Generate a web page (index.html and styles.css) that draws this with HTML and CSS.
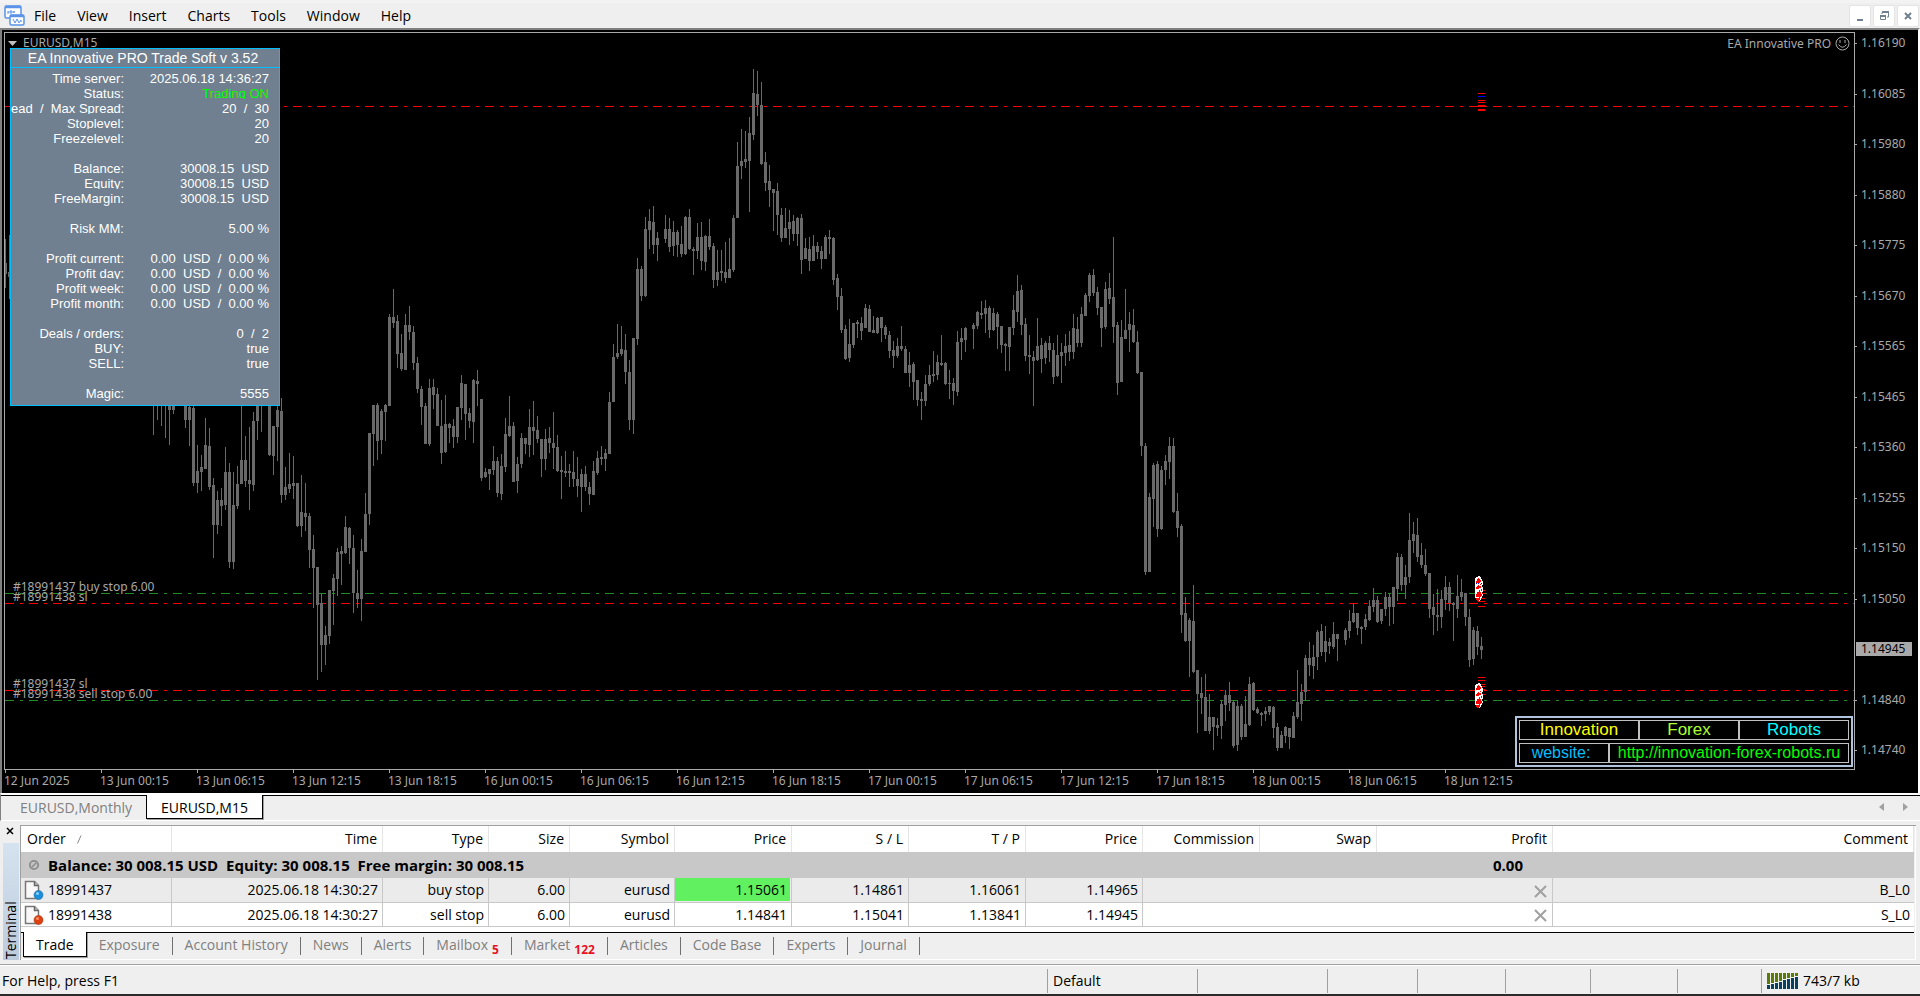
FILE: index.html
```html
<!DOCTYPE html>
<html lang="en">
<head>
<meta charset="utf-8">
<title>EURUSD,M15</title>
<link rel="stylesheet" href="styles.css">
</head>
<body>
<header class="menubar">
  <svg class="app-icon" width="22" height="22" viewBox="0 0 22 22" fill="none" stroke="#5a93e8" stroke-width="1.5">
    <rect x="1" y="1" width="16" height="12" rx="1.5" fill="#fff"/>
    <path d="M1 2h16" stroke-width="2.5"/>
    <path d="M4 9V6M7 9V5M10 8V6M4 7h7" stroke-width="1"/>
    <rect x="6" y="10" width="14" height="10" rx="1.5" fill="#fff"/>
    <path d="M6 11h14" stroke-width="2.5"/>
    <path d="M9 14l2 4 2-4 2 4 2-3v2" stroke-width="1"/>
  </svg>
  <nav class="menu" aria-label="Main menu">
    <button>File</button><button>View</button><button>Insert</button><button>Charts</button><button>Tools</button><button>Window</button><button>Help</button>
  </nav>
  <div class="window-buttons">
    <button aria-label="Minimize"><svg width="12" height="12" viewBox="0 0 12 12"><path d="M3 9h6v2H3z" fill="#708090"/></svg></button>
    <button aria-label="Restore"><svg width="12" height="12" viewBox="0 0 12 12" fill="none" stroke="#708090"><path d="M4 4V2.500h6.500V7H9"/><path d="M4 2h7" stroke-width="2"/><path d="M2.500 5.500h5v4h-5z"/><path d="M2 6h6" stroke-width="2"/></svg></button>
    <button aria-label="Close"><svg width="12" height="12" viewBox="0 0 12 12"><path d="M3 3l6 6M9 3l-6 6" stroke="#708090" stroke-width="2"/></svg></button>
  </div>
</header>

<main class="chart">
  <section class="plot">
    <svg class="canvas" id="canvas" preserveAspectRatio="none" aria-label="EURUSD M15 candlestick chart">
      <g class="levels">
        <path class="sell" d="M5 106.500H4000"/>
        <path class="buy" d="M5 593.500H4000"/>
        <path class="sell" d="M5 603.500H4000"/>
        <path class="sell" d="M5 690.500H4000"/>
        <path class="buy" d="M5 700.500H4000"/>
      </g>
      <path id="candles" class="candles"/>
      <g class="ticks">
        <path d="M1478 93.500h7M1478 100.500h7M1478 102.500h7M1478 105.500h7M1478 106.500h9M1478 109.500h7M1478 110.500h7"/>
        <path d="M1478 96.500h7" class="blue"/>
        <path d="M1478 590.500h7M1478 593.500h7M1478 598.500h7M1478 601.500h7M1478 606.500h7"/>
        <path d="M1478 677.500h7M1478 680.500h7M1478 684.500h7M1478 686.500h7M1478 689.500h7M1478 694.500h7"/>
      </g>
      <g id="arrows">
        <g id="stack">
          <path d="M1475 578h1v-1h2v-1h2v1h1v2h1v2h1v4h-1v2h1v5h-1v2h1v2h-1v2h-1v2h-1v1h-2v-1h-2v-2h-1z" fill="#fff"/>
          <path d="M1477 579h1v-1h1v1h1v1h1v2h-1v1h-4v-2h1zM1477 586h1v-1h1v1h2v2h-2v1h-3v-2h1zM1477 592h2v-1h1v1h1v2h1v2h-2v1h-4v-3h1zM1476 598h3v-1h1v3h-1v1h-2v-1h-1z" fill="#f00"/>
          <path d="M1480 584h1v1h-1zM1481 589h1v2h-1zM1479 590h1v1h-1zM1480 596h1v1h-1z" fill="#f00"/>
        </g>
        <use href="#stack" y="107"/>
        <path d="M1476 583h1v1h-1zM1481 583h1v1h-1zM1478 583h1v1h-1z" fill="#00f"/>
      </g>
      <g class="order-labels">
        <text x="13" y="591">#18991437 buy stop 6.00</text>
        <text x="13" y="601">#18991438 sl</text>
        <text x="13" y="688">#18991437 sl</text>
        <text x="13" y="698">#18991438 sell stop 6.00</text>
      </g>
    </svg>
    <div class="symbol"><svg width="10" height="5" viewBox="0 0 10 5"><path d="M0 0h9L4.500 5z" fill="#c0c0c0"/></svg><span>EURUSD,M15</span></div>
    <div class="expert"><span>EA Innovative PRO</span><svg width="15" height="15" viewBox="0 0 15 15" fill="none" stroke="#a9a9a9"><circle cx="7.500" cy="7.500" r="6.500"/><path d="M5 4v3M10 4v3M3.500 8.500q4 5.500 8 0"/></svg></div>

    <section class="ea-panel">
      <h1>EA Innovative PRO Trade Soft v 3.52</h1>
      <dl>
        <div><dt>Time server:</dt><dd>2025.06.18 14:36:27</dd></div>
        <div><dt>Status:</dt><dd class="on">Trading ON</dd></div>
        <div><dt>ead  /  Max Spread:</dt><dd>20  /  30</dd></div>
        <div><dt>Stoplevel:</dt><dd>20</dd></div>
        <div class="last"><dt>Freezelevel:</dt><dd>20</dd></div>
        <div><dt>Balance:</dt><dd>30008.15  USD</dd></div>
        <div><dt>Equity:</dt><dd>30008.15  USD</dd></div>
        <div class="last"><dt>FreeMargin:</dt><dd>30008.15  USD</dd></div>
        <div class="last"><dt>Risk MM:</dt><dd>5.00 %</dd></div>
        <div><dt>Profit current:</dt><dd>0.00  USD  /  0.00 %</dd></div>
        <div><dt>Profit day:</dt><dd>0.00  USD  /  0.00 %</dd></div>
        <div><dt>Profit week:</dt><dd>0.00  USD  /  0.00 %</dd></div>
        <div class="last"><dt>Profit month:</dt><dd>0.00  USD  /  0.00 %</dd></div>
        <div><dt>Deals / orders:</dt><dd>0  /  2</dd></div>
        <div><dt>BUY:</dt><dd>true</dd></div>
        <div class="last"><dt>SELL:</dt><dd>true</dd></div>
        <div class="last"><dt>Magic:</dt><dd>5555</dd></div>
      </dl>
    </section>

    <aside class="brand">
      <div class="brand-row names"><span class="yellow">Innovation</span><span class="lime">Forex</span><span class="aqua">Robots</span></div>
      <div class="brand-row site"><span class="sky">website:</span><a href="http://innovation-forex-robots.ru">http://innovation-forex-robots.ru</a></div>
    </aside>
  </section>

  <div class="prices">
    <span>1.16190</span><span>1.16085</span><span>1.15980</span><span>1.15880</span><span>1.15775</span><span>1.15670</span><span>1.15565</span><span>1.15465</span><span>1.15360</span><span>1.15255</span><span>1.15150</span><span>1.15050</span><span class="current">1.14945</span><span>1.14840</span><span>1.14740</span>
  </div>
  <div class="times">
    <span>12 Jun 2025</span><span>13 Jun 00:15</span><span>13 Jun 06:15</span><span>13 Jun 12:15</span><span>13 Jun 18:15</span><span>16 Jun 00:15</span><span>16 Jun 06:15</span><span>16 Jun 12:15</span><span>16 Jun 18:15</span><span>17 Jun 00:15</span><span>17 Jun 06:15</span><span>17 Jun 12:15</span><span>17 Jun 18:15</span><span>18 Jun 00:15</span><span>18 Jun 06:15</span><span>18 Jun 12:15</span>
  </div>
</main>

<nav class="chart-tabs" aria-label="Charts">
  <button>EURUSD,Monthly</button><button class="active">EURUSD,M15</button>
  <div class="scroller">
    <button aria-label="Scroll left"><svg width="5" height="8" viewBox="0 0 5 8"><path d="M5 0v8L0 4z" fill="#a0a0a0"/></svg></button>
    <button aria-label="Scroll right"><svg width="5" height="8" viewBox="0 0 5 8"><path d="M0 0v8l5-4z" fill="#a0a0a0"/></svg></button>
  </div>
</nav>

<section class="terminal">
  <div class="side">
    <button aria-label="Close terminal"><svg width="8" height="8" viewBox="0 0 8 8"><path d="M1 1l6 6M7 1L1 7" stroke="#000" stroke-width="1.500"/></svg></button>
    <div class="side-title">Terminal</div>
  </div>
  <div class="terminal-body">
    <table class="orders">
      <colgroup><col class="w-order"><col class="w-time"><col class="w-type"><col class="w-size"><col class="w-symbol"><col class="w-price"><col class="w-price"><col class="w-price"><col class="w-price"><col class="w-price"><col class="w-price"><col class="w-profit"><col></colgroup>
      <thead>
        <tr><th class="left">Order <svg class="sort" width="5" height="9" viewBox="0 0 5 9"><path d="M.5 8.500L4 .5" stroke="#888"/></svg></th><th>Time</th><th>Type</th><th>Size</th><th>Symbol</th><th>Price</th><th>S / L</th><th>T / P</th><th>Price</th><th>Commission</th><th>Swap</th><th>Profit</th><th>Comment</th></tr>
      </thead>
      <tbody>
        <tr class="summary"><td colspan="11" class="left"><span class="cell"><svg width="20" height="20" viewBox="0 0 20 20"><circle cx="10" cy="10" r="4.200" fill="#c4c4c4" stroke="#8c8c8c" stroke-width="1.800"/><path d="M7.500 12.500l5-5" stroke="#8c8c8c" stroke-width="1.500"/></svg><span class="pre">Balance: 30 008.15 USD  Equity: 30 008.15  Free margin: 30 008.15</span></span></td><td class="total">0.00</td><td></td></tr>
        <tr class="shade"><td class="left"><span class="cell"><svg width="20" height="20" viewBox="0 0 20 20"><path d="M1.500 1.500h9l4 4v13h-13z" fill="#f8f8f8" stroke="#777" stroke-width="1.500"/><path d="M10.500 1.500v4h4" fill="#ccc" stroke="#666" stroke-width="1.500"/><circle cx="14.500" cy="15" r="4.500" fill="#1a90dc" stroke="#2a6a9a" stroke-width=".6"/><circle cx="13.500" cy="13.500" r="1.500" fill="#8cd0fa"/></svg>18991437</span></td><td>2025.06.18 14:30:27</td><td>buy stop</td><td>6.00</td><td>eurusd</td><td class="hit"><span>1.15061</span></td><td>1.14861</td><td>1.16061</td><td>1.14965</td><td colspan="3"><button aria-label="Delete order 18991437"><svg width="13" height="13" viewBox="0 0 13 13"><path d="M1 1l11 11M12 1L1 12" stroke="#a0a0a0" stroke-width="2"/></svg></button></td><td>B_L0</td></tr>
        <tr><td class="left"><span class="cell"><svg width="20" height="20" viewBox="0 0 20 20"><path d="M1.500 1.500h9l4 4v13h-13z" fill="#f8f8f8" stroke="#777" stroke-width="1.500"/><path d="M10.500 1.500v4h4" fill="#ccc" stroke="#666" stroke-width="1.500"/><circle cx="14.500" cy="15" r="4.500" fill="#e04010" stroke="#a03818" stroke-width=".6"/><circle cx="13.500" cy="13.500" r="1.500" fill="#f89068"/></svg>18991438</span></td><td>2025.06.18 14:30:27</td><td>sell stop</td><td>6.00</td><td>eurusd</td><td>1.14841</td><td>1.15041</td><td>1.13841</td><td>1.14945</td><td colspan="3"><button aria-label="Delete order 18991438"><svg width="13" height="13" viewBox="0 0 13 13"><path d="M1 1l11 11M12 1L1 12" stroke="#a0a0a0" stroke-width="2"/></svg></button></td><td>S_L0</td></tr>
      </tbody>
    </table>
    <nav class="terminal-tabs" aria-label="Terminal">
      <button class="active">Trade</button><button>Exposure</button><button>Account History</button><button>News</button><button>Alerts</button><button>Mailbox<sub>5</sub></button><button>Market<sub>122</sub></button><button>Articles</button><button>Code Base</button><button>Experts</button><button>Journal</button>
    </nav>
  </div>
</section>

<footer class="status">
  <span>For Help, press F1</span><span>Default</span><span></span><span></span><span></span><span></span><span></span><span></span>
  <span class="traffic"><svg width="31" height="16" viewBox="0 0 31 16"><path d="M0 0h3v11H0zM4 0h3v10H4zM8 0h3v9H8zM12 0h3v8h-3zM16 0h3v6h-3zM20 0h3v5h-3zM24 0h3v4h-3zM28 0h3v3h-3z" fill="#5a7a0a"/><path d="M0 12h3v4H0zM4 11h3v5H4zM8 10h3v6H8zM12 9h3v7h-3zM16 7h3v9h-3zM20 6h3v10h-3zM24 5h3v11h-3zM28 4h3v12h-3z" fill="#0a4060"/></svg>743/7 kb</span>
</footer>
<script src="chart.js"></script>
</body>
</html>
```
FILE: chart.js
```js
// Candles are [high, bodyTop, bodyBottom, low]; 0 marks a missing bar.
// Each run is drawn from x in steps of 4px; y = top + value / scale.
const runs = [
  { x: 5, top: 0, scale: 3, bars: [[717,790,822,864],[705,815,830,896]] },
  { x: 153, top: 400, scale: 3, bars: [
    [0,0,0,104],[0,0,0,60],[0,0,0,78],[0,0,0,114],[0,0,30,134],[0,0,30,42],0,0,[0,0,59,84],[0,20,59,138],
    [15,23,249,258],[135,213,249,279],[165,201,216,273],[54,135,207,207],[84,138,261,270],[234,255,375,474],
    [273,300,375,402],[264,300,318,378],[141,216,315,330],[189,216,486,504],[216,315,486,507],[198,252,318,327],
    [15,180,252,252],[108,180,243,261],[81,240,252,330],[36,63,255,273],[0,0,63,120],[0,0,0,96],0,[0,0,165,168],
    [78,78,168,225],[15,30,81,183]] },
  { x: 281, top: 250, scale: 3, bars: [
    [444,483,735,759],[651,711,735,750],[609,702,717,729],[618,699,708,747],[699,699,828,831],[675,786,828,861],
    [699,789,801,843],[789,798,900,954],[855,897,954,1074],[951,951,1065,1290],[1032,1059,1185,1266],
    [1128,1155,1185,1245],[1020,1020,1158,1182],[972,984,1023,1125],[894,906,987,1038],[888,903,912,1005],
    [798,831,909,912],[831,834,894,942],[855,894,1029,1089],[960,1029,1047,1074],[867,903,1047,1113],
    [729,792,906,906],[549,549,792,825],[465,465,552,648],[459,465,573,630],[477,483,570,612],[462,465,486,573],
    [192,201,468,468],[117,201,219,234],[195,213,312,354],[252,309,357,363],[192,225,360,360],[168,225,246,270],
    [228,246,339,360],[321,339,417,429],[408,417,471,525],[459,468,582,582],[387,414,582,588],[387,411,435,477],
    [414,432,528,528],[450,528,609,642],[435,522,606,609],[519,522,534,579],[507,528,561,594],[471,471,561,579],
    [375,399,474,510],[402,402,492,570],[474,489,513,534],[387,390,516,579],[360,393,402,468],[447,447,684,693],
    [654,666,681,684],[657,657,672,720],[588,633,660,675],[621,633,729,741],[612,648,732,750],[504,552,651,666],
    [438,528,558,561],[516,528,696,696],[621,642,693,729],[549,564,642,654],[564,564,582,612],[477,531,585,621],
    [453,531,543,615],[498,540,567,579],[567,567,627,681],[537,567,627,660],[531,564,579,609],[486,579,594,657],
    [555,591,663,666],[618,660,666,747],[603,663,669,681],[642,663,669,711],[603,666,687,711],[621,687,708,741],
    [657,672,711,786],[648,672,711,723],[696,711,732,765],[633,663,735,735],[603,624,669,675],[588,621,627,645],
    [597,609,627,663]] },
  { x: 609, top: 50, scale: 3, bars: [
    [1026,1056,1212,1212],[882,921,1056,1056],[822,909,921,927],[828,897,912,918],[852,900,966,1002],
    [930,966,1110,1140],[864,864,1110,1152],[624,657,867,885],[648,657,738,753],[501,537,738,741],[477,513,540,597],
    [468,516,585,612],[546,564,585,633],0,[495,537,567,579],[504,537,591,606],[513,546,588,618],[540,546,585,621],
    [528,582,612,621],[498,501,612,615],[477,501,597,600],[591,597,603,675],[519,561,603,627],[516,561,633,660],
    [555,558,636,663],[507,558,591,600],[579,588,690,714],[600,666,690,708],[600,663,669,693],[576,666,684,699],
    [564,657,684,684],[495,504,660,666],[276,348,504,504],[237,333,348,387],[243,327,336,354],[201,249,333,486],
    [57,129,255,270],[63,132,165,198],[96,165,342,345],[306,336,399,423],[345,393,420,471],[417,417,429,543],
    [399,423,495,555],[474,495,564,576],[474,534,564,564],[480,516,537,585],[495,513,552,573],[501,504,552,588],
    [492,504,630,672],[564,594,627,627],[561,597,633,663],[555,588,633,633],[576,588,606,627],[588,603,627,657],
    [555,561,627,627],[540,561,567,612],[561,564,690,705],[672,684,741,780],[714,738,840,849],[825,837,927,930],
    [807,882,924,936],[819,819,885,894],[810,816,822,864],[801,819,843,870],[762,774,834,834],[765,777,846,846],
    [798,840,849,849],[801,804,849,852],[801,801,834,876],[825,831,855,867],[843,855,903,924],[873,900,918,954],
    [864,888,918,924],[828,888,897,903],[888,897,969,969],[906,945,969,1011],[936,942,996,1050],[990,990,1050,1068],
    [1026,1047,1053,1110],[975,1002,1053,1068],[945,975,1002,1008],[903,972,978,996],[915,936,975,990],
    [855,939,945,948],[936,939,1002,1005],[960,999,1002,1047],[984,999,1023,1065],[843,876,1026,1038]] },
  { x: 961, top: 220, scale: 2.904, bars: [
    [314,343,354,406],[311,314,348,383],0,[299,305,317,375],[264,267,308,317],[235,270,276,287],[232,256,273,328],
    [250,256,319,343],[256,270,319,322],[267,273,311,375],[308,308,363,386],[357,360,366,438],[311,311,369,438],
    [218,261,314,334],[160,206,267,296],[189,203,305,334],[285,302,395,409],[334,392,398,447],[380,398,409,540],
    [285,366,407,409],[343,363,404,444],[351,357,401,418],[337,357,377,412],[357,377,456,476],[334,392,453,456],
    [357,383,395,473],[331,366,386,424],[322,363,383,409],[273,314,383,404],[282,317,357,369],[253,273,357,369],
    [212,218,279,279],[154,160,221,238],[142,160,212,221],[195,209,256,276],[253,253,314,369],[180,200,311,317],
    [154,197,229,244],[49,224,311,357],[296,305,473,508],[290,340,470,470],[200,319,346,346],[267,302,319,383],
    [258,305,354,357],[322,354,444,447],[441,441,656,685],[648,656,1022,1031],[793,804,1022,1022],[706,711,810,891],
    [700,709,897,920],[714,726,897,900],[682,700,726,769],[630,656,703,752],[633,656,848,851],[793,845,894,920],
    [883,889,1147,1199],[1095,1141,1222,1225],[1156,1161,1222,1327],[1060,1164,1312,1315],[1307,1307,1376,1490],
    [1327,1373,1388,1434],[1318,1385,1484,1484],[1376,1443,1484,1493],[1443,1443,1472,1539],[1446,1466,1475,1498],
    [1397,1405,1469,1507],[1365,1379,1408,1455],[1342,1379,1402,1426],[1394,1400,1527,1533],[1397,1411,1524,1542],
    [1405,1411,1501,1510],[1382,1463,1501,1501],[1327,1347,1466,1469],[1342,1344,1423,1426],[1414,1420,1432,1434],
    [1429,1432,1438,1469],[1414,1426,1434,1455],[1411,1411,1429,1437],[1411,1414,1475,1504],[1461,1472,1533,1542],
    [1484,1495,1533,1533],[1469,1472,1498,1519],[1475,1475,1501,1536],[1429,1440,1504,1504],[1307,1400,1443,1449],
    [1347,1371,1405,1455],[1263,1272,1371,1397],[1225,1272,1292,1324],[1234,1269,1295,1333],[1191,1196,1269,1307],
    [1173,1193,1254,1266],[1179,1222,1254,1283],[1214,1225,1237,1260],[1167,1202,1240,1246],[1202,1202,1217,1281],0,
    [1185,1191,1220,1234],[1132,1164,1193,1214],[1112,1141,1167,1170],[1141,1141,1185,1205]] },
  { x: 1361, top: 480, scale: 3, bars: [
    [438,441,447,492],[402,417,441,450],[360,378,420,423],[324,360,381,396],[348,360,426,429],[387,387,423,432],
    [336,351,387,408],[342,351,381,438],[321,321,381,432],[219,231,327,363],[222,231,315,333],[255,291,315,357],
    [99,180,291,309],[126,162,183,219],[114,165,231,246],[189,225,255,264],[207,255,282,288],[279,279,387,414],
    [342,381,405,465],[327,405,411,453],[330,357,411,444],[288,321,360,390],[306,321,369,393],[366,369,375,483],
    [285,348,387,414],[297,336,351,363],[339,339,411,438],[387,411,540,561],[441,450,537,555],[438,453,501,525],
    [471,498,510,537]] },
];

let d = "";
for (const run of runs) {
  run.bars.forEach((bar, i) => {
    if (!bar) return;
    const x = run.x + i * 4;
    const [high, top, bottom, low] = bar.map(v => Math.round(run.top + v / run.scale));
    d += `M${x} ${high}h1V${low}h-1z`;
    if (bottom > top) d += `M${x - 1} ${top}h3V${bottom}h-3z`;
  });
}
document.getElementById("candles").setAttribute("d", d);

const canvas = document.getElementById("canvas");
function fit() {
  canvas.setAttribute("viewBox", `5 33 ${canvas.parentElement.clientWidth} 736`);
}
fit();
window.addEventListener("resize", fit);
```
FILE: styles.css
```css
* { box-sizing: border-box; }

body {
  margin: 0;
  min-height: 100vh;
  display: flex;
  flex-direction: column;
  background: #efefef;
  color: #000;
  font: 14px/20px "Open Sans", "Noto Sans", sans-serif;
}

button {
  margin: 0;
  padding: 0;
  border: 0;
  background: none;
  color: inherit;
  font: inherit;
}

svg { display: block; flex: none; }

/* Menu bar */
.menubar {
  height: 28px;
  display: flex;
  align-items: center;
  border-top: 3px solid #f3f3f3;
  padding: 0 1px 0 4px;
}
.menu { display: flex; gap: 21px; margin-left: 8px; padding-top: 1px; }
.window-buttons { display: flex; gap: 2px; margin-left: auto; }
.window-buttons button {
  width: 22px;
  height: 22px;
  display: grid;
  place-items: center;
  background: #fff;
  border: 1px solid #e4e4e4;
  border-radius: 2px;
}

/* Chart */
.chart {
  flex: 1;
  min-height: 500px;
  display: grid;
  grid-template-columns: minmax(0, 1fr) 63px;
  grid-template-rows: minmax(0, 1fr) 23px;
  padding: 2px 0 0 2px;
  background: #000;
  border: solid #808080;
  border-width: 2px 2px 0 2px;
  border-right-color: #fff;
  color: #a9a9a9;
  font: 12px/14px "Noto Sans", "DejaVu Sans", sans-serif;
}
.plot { position: relative; border: 1px solid #a9a9a9; overflow: hidden; }
.canvas { width: 100%; height: 100%; position: absolute; inset: 0; }
.levels path { fill: none; stroke-width: 1; stroke-dasharray: 9 6 3 6; }
.levels .sell { stroke: #f00; }
.levels .buy { stroke: #228b22; }
.levels, .candles, .ticks, #arrows { shape-rendering: crispEdges; }
.candles { fill: #696969; }
.ticks path { stroke: #f00; }
.ticks .blue { stroke: #00f; }
.order-labels { fill: #a9a9a9; }

.symbol { position: absolute; left: 3px; top: 3px; display: flex; align-items: center; gap: 5px; }
.expert { position: absolute; right: 4px; top: 3px; display: flex; align-items: center; gap: 4px; }

.ea-panel {
  position: absolute;
  left: 5px;
  top: 15px;
  width: 270px;
  height: 358px;
  border: 1px solid #00bfff;
  background: #708090;
  color: #fff;
  font: 13px/19px "Liberation Sans", Arial, sans-serif;
}
.ea-panel h1 {
  margin: 0;
  height: 19px;
  padding-right: 4px;
  border-bottom: 1px solid #00bfff;
  font-size: 14px;
  line-height: 19px;
  font-weight: normal;
  text-align: center;
}
.ea-panel dl { margin: 1px 0 0; }
.ea-panel dl div {
  height: 15px;
  display: grid;
  grid-template-columns: 113px 145px;
  overflow: hidden;
  white-space: pre;
  text-align: right;
}
.ea-panel dl .last { overflow: visible; margin-bottom: 15px; }
.ea-panel dd { margin: 0; }
.ea-panel .on { color: #0f0; }

.brand {
  position: absolute;
  right: 1px;
  bottom: 2px;
  width: 338px;
  padding: 2px;
  border: 2px solid #b0c4de;
  background: #000;
  font: 16px/18px "Liberation Sans", Arial, sans-serif;
  display: grid;
  gap: 3px;
}
.brand-row { display: grid; text-align: center; }
.brand-row > * { border: 1px solid #c0c0c0; height: 20px; }
.names { grid-template-columns: 120px 100px 1fr; font-size: 17px; }
.site { grid-template-columns: 90px 1fr; }
.yellow { color: #ff0; }
.lime { color: #adff2f; }
.aqua { color: #0ff; }
.sky { color: #00bfff; }
.site .sky { padding-right: 6px; }
.site a { color: #0f0; text-decoration: none; }

.prices {
  grid-row: 1 / 3;
  grid-column: 2;
  display: flex;
  flex-direction: column;
  justify-content: space-between;
  padding: 4px 6px 36px 0;
}
.prices span { position: relative; padding-left: 6px; }
.prices span::before {
  content: "";
  position: absolute;
  left: 0;
  top: 7px;
  width: 2px;
  height: 1px;
  background: #a9a9a9;
}
.prices .current { margin-left: 1px; padding-left: 5px; background: #a9a9a9; color: #000; }

.times { display: flex; overflow: hidden; }
.times span {
  flex: none;
  width: 96px;
  padding-top: 4px;
  background: linear-gradient(#a9a9a9, #a9a9a9) 1px 0 / 1px 3px no-repeat;
}

/* Chart tabs */
.chart-tabs {
  height: 28px;
  display: flex;
  align-items: flex-start;
  border-top: 2px solid #fff;
  border-bottom: 1px solid #fff;
  box-shadow: inset 0 1px #000;
  border-left: 1px solid #808080;
}
.chart-tabs > button { height: 24px; padding: 2px 14px 0; color: #808080; }
.chart-tabs > button:first-child { padding-left: 19px; }
.chart-tabs .active {
  color: #000;
  background: #fff;
  border: solid #000;
  border-width: 0 1px 1px;
  box-shadow: 1px 1px #a0a0a0;
}
.scroller { display: flex; gap: 19px; margin: 8px 12px 0 auto; }

/* Terminal */
.terminal { display: flex; padding: 4px 4px 0 3px; }
.side { width: 16px; display: flex; flex-direction: column; align-items: center; gap: 8px; padding-top: 2px; }
.side button { margin-right: 2px; }
.side-title {
  flex: 1;
  width: 16px;
  writing-mode: vertical-rl;
  transform: rotate(180deg);
  padding-top: 1px;
  line-height: 16px;
  background: linear-gradient(#bccbdc, #d5e3f0);
}
.terminal-body {
  flex: 1;
  min-width: 0;
  margin-left: 1px;
  border: solid #a0a0a0;
  border-width: 1px 0 0 1px;
  box-shadow: inset -1px -1px #fff;
  padding-right: 2px;
}
.orders {
  width: 100%;
  table-layout: fixed;
  border-spacing: 0;
  background: #fff;
  white-space: nowrap;
  text-align: right;
  border-bottom: 5px solid #fff;
}
.w-order { width: 151px; }
.w-time { width: 211px; }
.w-type { width: 106px; }
.w-size { width: 81px; }
.w-symbol { width: 105px; }
.w-price { width: 117px; }
.w-profit { width: 176px; }
.orders th { height: 26px; padding: 0 5px 0 6px; font-weight: normal; border-right: 1px solid #e5e5e5; }
.orders td { height: 24px; padding: 0 4px 0 3px; border-right: 1px solid #c8c8c8; border-bottom: 1px solid #c8c8c8; }
.orders td:last-child, .orders .summary td { border-right: 0; }
.orders .left { text-align: left; }
.orders .summary td { height: 26px; background: #c8c8c8; font-size: 15px; font-weight: bold; }
.orders .summary .total { padding-right: 30px; }
.orders .shade td { height: 25px; background: #ebebeb; }
.orders .shade .hit { padding: 0 1px 1px 0; }
.hit span { display: block; height: 23px; line-height: 23px; padding-right: 3px; background: #60f060; }
.sort { display: inline; margin-left: 8px; }
.cell { display: flex; align-items: center; gap: 4px; }
.pre { white-space: pre; }
.orders button { display: inline-block; padding-right: 1px; vertical-align: middle; }

.terminal-tabs {
  height: 28px;
  display: flex;
  align-items: flex-start;
  border-top: 1px solid #000;
  padding-left: 2px;
  color: #808080;
}
.terminal-tabs button {
  position: relative;
  height: 23px;
  padding: 1px 13px 0 12px;
  line-height: 20px;
}
.terminal-tabs button::after {
  content: "";
  position: absolute;
  right: 0;
  top: 4px;
  width: 1px;
  height: 18px;
  background: #707070;
}
.terminal-tabs .active {
  height: 25px;
  margin-top: -1px;
  padding: 2px 12px 0;
  color: #000;
  background: #fff;
  border: solid #000;
  border-width: 0 1px 1px;
  box-shadow: 1px 1px #a0a0a0;
}
.terminal-tabs .active::after { content: none; }
.terminal-tabs sub {
  margin-left: 4px;
  color: #e81123;
  font: bold 12px/12px "Open Sans", sans-serif;
  vertical-align: -4px;
}

/* Status bar */
.status {
  height: 36px;
  display: grid;
  grid-template-columns: minmax(0, 1fr) 150px 130px 90px 88px 85px 87px 84px 159px;
  align-items: center;
  padding: 8px 0 1px;
  background: linear-gradient(#efefef 0 4px, #a0a0a0 4px 5px, #fff 5px 6px, #efefef 6px);
  border-bottom: 2px solid #2b2b2b;
}
.status span { height: 24px; padding-left: 5px; line-height: 24px; border-left: 1px solid #a0a0a0; }
.status span:first-child { padding-left: 2px; border: 0; }
.status .traffic { display: flex; align-items: center; gap: 5px; }
```
